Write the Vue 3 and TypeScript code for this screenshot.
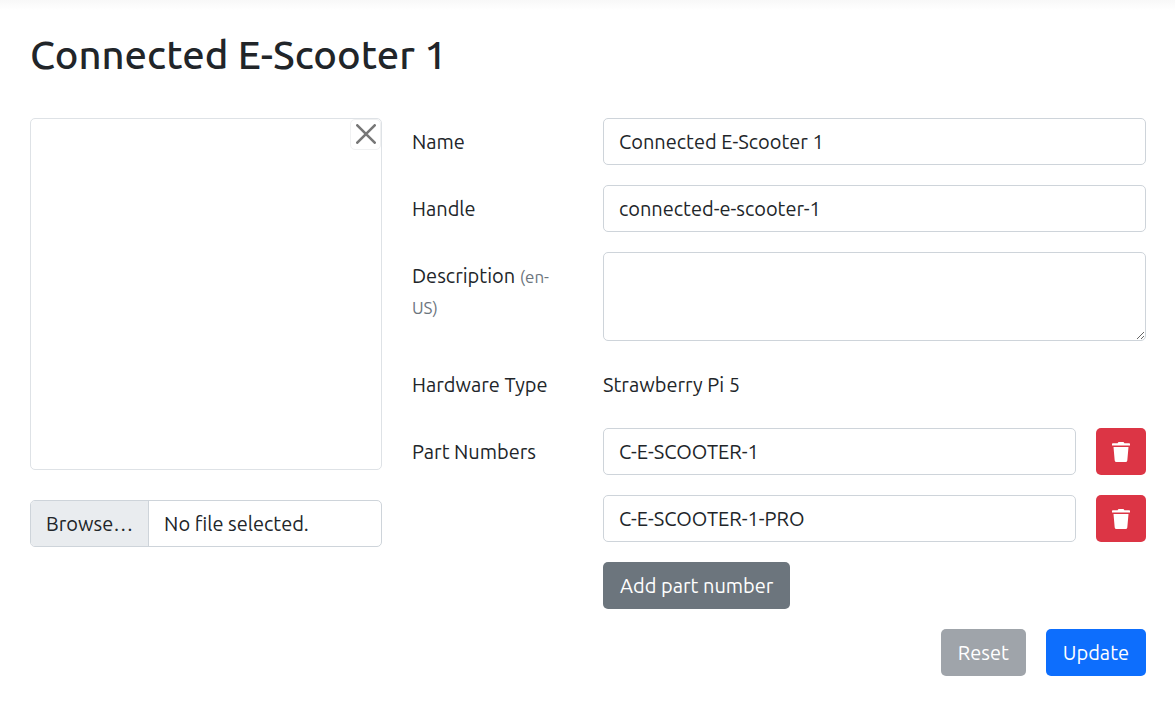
<script setup lang="ts">
import { ref, reactive } from 'vue'

interface Part {
  id: number
  value: string
}

const title = ref('Connected E-Scooter 1')
const form = reactive({
  name: 'Connected E-Scooter 1',
  handle: 'connected-e-scooter-1',
  description: '',
  hardwareType: 'Strawberry Pi 5',
})
const parts = ref<Part[]>([
  { id: 1, value: 'C-E-SCOOTER-1' },
  { id: 2, value: 'C-E-SCOOTER-1-PRO' },
])
const fileName = ref('')
let nextId = 3

function addPart(): void {
  parts.value.push({ id: nextId++, value: '' })
}

function removePart(id: number): void {
  parts.value = parts.value.filter((part) => part.id !== id)
}

function onFile(event: Event): void {
  fileName.value = (event.target as HTMLInputElement).files?.[0]?.name ?? ''
}
</script>

<template>
  <main class="page">
    <h1 class="title">{{ title }}</h1>
    <form class="layout" @submit.prevent>
      <section class="media">
        <div class="preview">
          <button type="button" class="clear" aria-label="Remove image" @click="fileName = ''">
            <svg viewBox="0 0 20 20" width="20" height="20" aria-hidden="true">
              <path d="M1.3 1.3 18.7 18.7M18.7 1.3 1.3 18.7" fill="none" stroke="currentColor" stroke-width="2.6" stroke-linecap="round" />
            </svg>
          </button>
        </div>
        <label class="file">
          <input class="file-input" type="file" accept="image/*" @change="onFile" />
          <span class="file-button">Browse…</span>
          <span class="file-name">{{ fileName || 'No file selected.' }}</span>
        </label>
      </section>

      <section class="fields">
        <label class="label" for="name">Name</label>
        <input id="name" v-model="form.name" class="control" type="text" />

        <label class="label" for="handle">Handle</label>
        <input id="handle" v-model="form.handle" class="control" type="text" />

        <label class="label" for="description">Description <small class="locale">(en-US)</small></label>
        <textarea id="description" v-model="form.description" class="control area"></textarea>

        <span class="label">Hardware Type</span>
        <span class="value">{{ form.hardwareType }}</span>

        <label class="label" for="part-1">Part Numbers</label>
        <div class="parts">
          <div v-for="part in parts" :key="part.id" class="part">
            <input :id="`part-${part.id}`" v-model="part.value" class="control" type="text" aria-label="Part number" />
            <button type="button" class="btn danger" aria-label="Delete part number" @click="removePart(part.id)">
              <svg viewBox="0 0 18 20" width="18" height="20" aria-hidden="true">
                <path d="M.8 1.2H5.6Q6 0 7 0H11Q12 0 12.4 1.2H17.2Q18 1.2 18 2V3.6H0V2Q0 1.2.8 1.2ZM1.5 5H16.5L15.3 18.4Q15.1 20 13.6 20H4.4Q2.9 20 2.7 18.4Z" fill="currentColor" />
              </svg>
            </button>
          </div>
          <button type="button" class="btn secondary" @click="addPart">Add part number</button>
        </div>

        <div class="actions">
          <button type="reset" class="btn secondary" disabled>Reset</button>
          <button type="submit" class="btn primary">Update</button>
        </div>
      </section>
    </form>
  </main>
</template>

<style>
body {
  margin: 0;
  background: #fff;
}
</style>

<style scoped>
.page {
  box-sizing: border-box;
  padding: 31px 29px 30px 30px;
  background: linear-gradient(#f8f8f8, #fff 10px);
  color: #212529;
  font-family: Ubuntu, "Noto Sans", sans-serif;
  font-size: 20px;
  font-weight: 400;
  line-height: 30px;
}

.page *,
.page *::before {
  box-sizing: border-box;
}

.title {
  margin: 0 0 39px;
  font-size: 40px;
  font-weight: 500;
  line-height: 48px;
}

.layout {
  display: grid;
  grid-template-columns: repeat(12, minmax(0, 1fr));
  column-gap: 30px;
  align-items: start;
}

.media {
  grid-column: span 4;
  display: grid;
  gap: 30px;
}

.preview {
  position: relative;
  aspect-ratio: 1;
  border: 1px solid #dee2e6;
  border-radius: 5px;
}

.clear {
  position: absolute;
  top: 0;
  right: 0;
  display: grid;
  place-items: center;
  width: 31px;
  height: 31px;
  padding: 0 0 2px;
  border: 1px solid #f0f1f2;
  border-radius: 5px;
  background: #fff;
  color: #777;
}

.file {
  position: relative;
  display: flex;
  overflow: hidden;
  border: 1px solid #ced4da;
  border-radius: 5px;
}

.file-input {
  position: absolute;
  inset: 0;
  width: 100%;
  opacity: 0;
}

.file-button {
  padding: 8px 15px 7px;
  border-right: 1px solid #ced4da;
  background: #e9ecef;
}

.file-name {
  flex: 1;
  min-width: 0;
  padding: 8px 15px 7px;
  overflow: hidden;
  text-overflow: ellipsis;
  white-space: nowrap;
}

.fields {
  grid-column: span 8;
  display: grid;
  grid-template-columns: repeat(8, minmax(0, 1fr));
  gap: 20px 30px;
  align-items: start;
}

.label {
  grid-column: span 2;
}

.value,
.fields > .control,
.parts {
  grid-column: span 6;
}

.label,
.value {
  padding: 9px 0 8px;
}

.locale {
  color: #6c757d;
  font-size: 17px;
}

.control {
  width: 100%;
  height: 47px;
  margin: 0;
  padding: 7px 15px;
  border: 1px solid #ced4da;
  border-radius: 5px;
  background: #fff;
  color: inherit;
  font: inherit;
}

.fields > .area {
  display: block;
  height: 89px;
  resize: vertical;
}

.parts {
  display: grid;
  gap: 20px;
  justify-items: start;
}

.part {
  display: flex;
  gap: 20px;
  width: 100%;
}

.part .control {
  flex: 1;
  min-width: 0;
}

.btn {
  height: 47px;
  margin: 0;
  padding: 0 17px;
  border: 0;
  border-radius: 5px;
  color: #fff;
  font: inherit;
  white-space: nowrap;
}

.btn svg {
  display: block;
}

.danger {
  padding: 0 16px;
  background: #dc3545;
}

.secondary {
  background: #6c757d;
}

.secondary:disabled {
  background: #9fa4aa;
}

.primary {
  background: #0d6efd;
}

.actions {
  grid-column: 1 / -1;
  display: flex;
  justify-content: flex-end;
  gap: 20px;
}
</style>
